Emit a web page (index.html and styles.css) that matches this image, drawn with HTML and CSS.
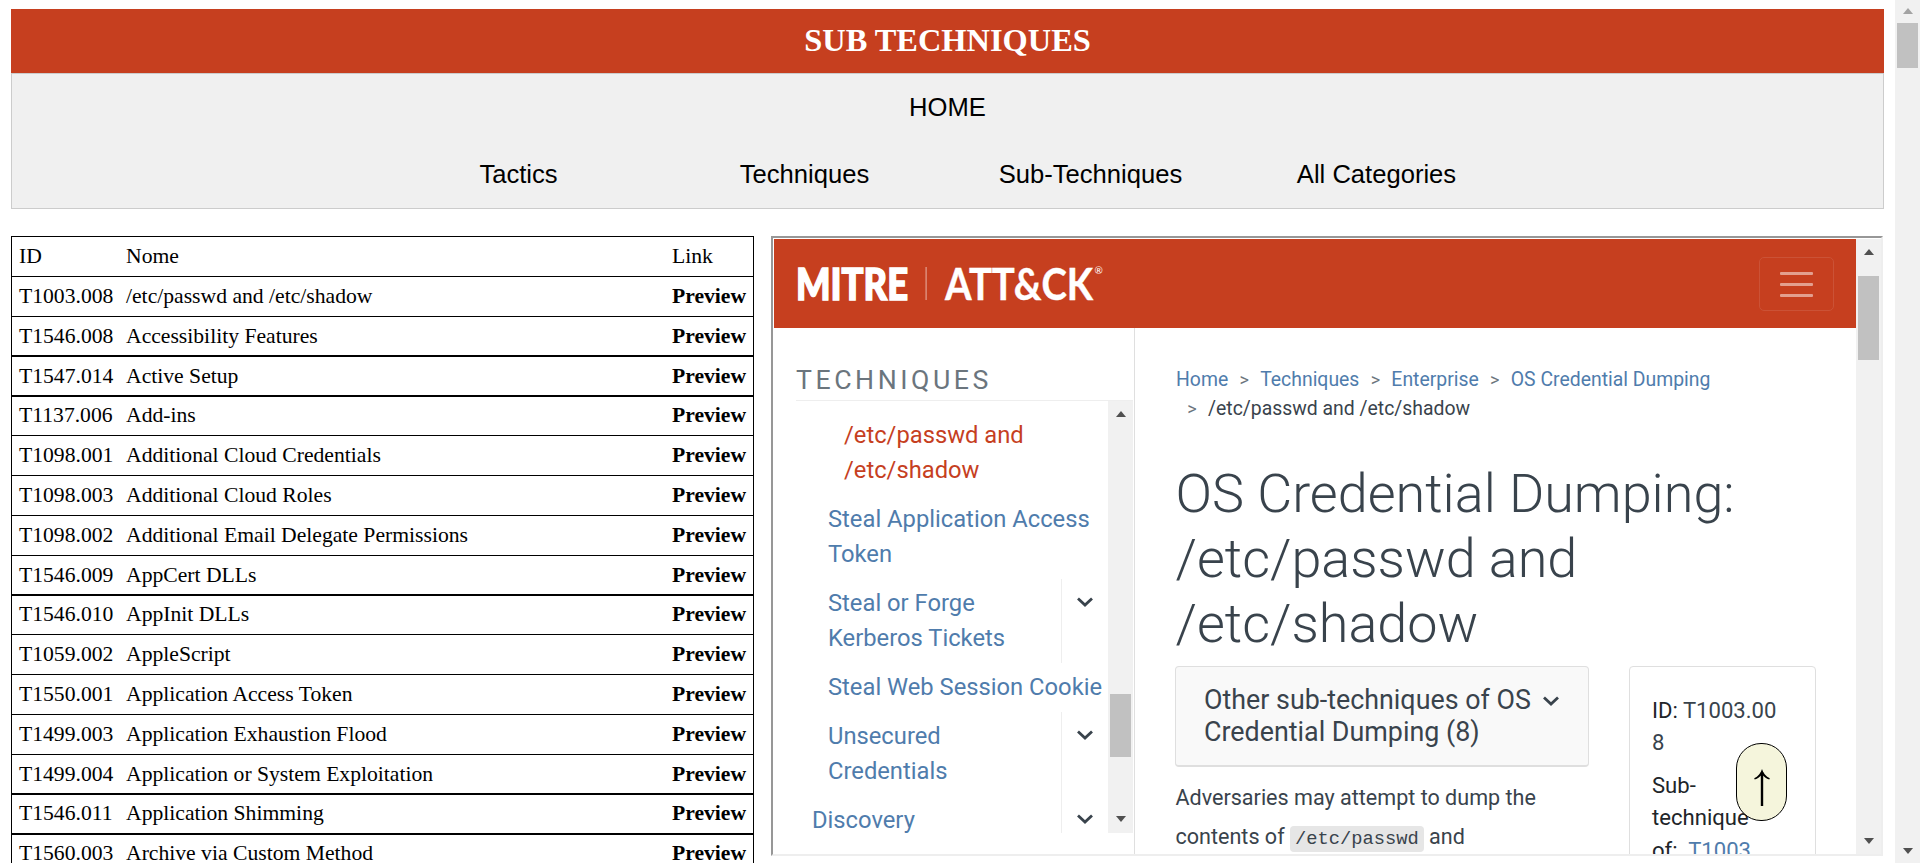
FILE: index.html
```html
<!DOCTYPE html>
<html lang="en">
<head>
<meta charset="utf-8">
<title>Sub Techniques</title>
<link rel="stylesheet" href="styles.css">
</head>
<body>
<div class="page">
  <main class="content">
    <header class="banner"><h1 class="banner-title"><span>SUB TECHNIQUES</span></h1></header>
    <nav class="nav">
      <div class="nav-home"><a>HOME</a></div>
      <div class="nav-links"><a>Tactics</a><a>Techniques</a><a>Sub-Techniques</a><a>All Categories</a></div>
    </nav>
    <div class="columns">
      <div class="table">
        <div class="row"><span>ID</span><span>Nome</span><span>Link</span></div>
        <div class="row"><span>T1003.008</span><span>/etc/passwd and /etc/shadow</span><b>Preview</b></div>
        <div class="row short"><span>T1546.008</span><span>Accessibility Features</span><b>Preview</b></div>
        <div class="row thick low"><span>T1547.014</span><span>Active Setup</span><b>Preview</b></div>
        <div class="row thick"><span>T1137.006</span><span>Add-ins</span><b>Preview</b></div>
        <div class="row"><span>T1098.001</span><span>Additional Cloud Credentials</span><b>Preview</b></div>
        <div class="row"><span>T1098.003</span><span>Additional Cloud Roles</span><b>Preview</b></div>
        <div class="row"><span>T1098.002</span><span>Additional Email Delegate Permissions</span><b>Preview</b></div>
        <div class="row short"><span>T1546.009</span><span>AppCert DLLs</span><b>Preview</b></div>
        <div class="row thick"><span>T1546.010</span><span>AppInit DLLs</span><b>Preview</b></div>
        <div class="row"><span>T1059.002</span><span>AppleScript</span><b>Preview</b></div>
        <div class="row"><span>T1550.001</span><span>Application Access Token</span><b>Preview</b></div>
        <div class="row"><span>T1499.003</span><span>Application Exhaustion Flood</span><b>Preview</b></div>
        <div class="row short"><span>T1499.004</span><span>Application or System Exploitation</span><b>Preview</b></div>
        <div class="row thick"><span>T1546.011</span><span>Application Shimming</span><b>Preview</b></div>
        <div class="row thick"><span>T1560.003</span><span>Archive via Custom Method</span><b>Preview</b></div>
      </div>
      <div class="frame">
        <div class="doc">
          <div class="topbar">
            <svg class="logo" width="310" height="40" viewBox="0 0 310 40">
              <text class="logo-mitre" x="0" y="35.500" textLength="112" lengthAdjust="spacingAndGlyphs">MITRE</text>
              <rect class="logo-rule" x="129.5" y="3" width="1.2" height="33"/>
              <text class="logo-attack" x="149" y="35.500" textLength="148" lengthAdjust="spacingAndGlyphs">ATT&amp;CK</text>
              <text class="logo-reg" x="298.5" y="10">®</text>
            </svg>
            <div class="burger"><i></i><i></i><i></i></div>
          </div>
          <div class="doc-body">
            <aside class="side">
              <div class="side-title"><span>TECHNIQUES</span></div>
              <div class="side-main">
                <div class="side-list">
                  <div class="item deep"><a>/etc/passwd and<br>/etc/shadow</a></div>
                  <div class="item"><a>Steal Application Access<br>Token</a></div>
                  <div class="item"><a>Steal or Forge<br>Kerberos Tickets</a><div class="toggle"><svg class="chev" viewBox="0 0 16 10"><path d="M1 1.5l7 6.5 7-6.5"/></svg></div></div>
                  <div class="item one"><a>Steal Web Session Cookie</a></div>
                  <div class="item"><a>Unsecured<br>Credentials</a><div class="toggle"><svg class="chev" viewBox="0 0 16 10"><path d="M1 1.5l7 6.5 7-6.5"/></svg></div></div>
                  <div class="item one top"><a>Discovery</a><div class="toggle"><svg class="chev" viewBox="0 0 16 10"><path d="M1 1.5l7 6.5 7-6.5"/></svg></div></div>
                </div>
                <div class="scroll side-scroll"><div class="up"></div><div class="thumb"></div><div class="down"></div></div>
              </div>
            </aside>
            <article class="article">
              <div class="crumbs"><a>Home</a><i>&gt;</i><a>Techniques</a><i>&gt;</i><a>Enterprise</a><i>&gt;</i><a>OS Credential Dumping</a></div>
              <div class="crumbs second"><i>&gt;</i><span>/etc/passwd and /etc/shadow</span></div>
              <h2 class="title"><span>OS Credential Dumping:</span><br>/etc/passwd and<br>/etc/shadow</h2>
              <div class="cards">
                <div class="left">
                  <div class="subs"><div class="subs-text"><span>Other sub-techniques of OS</span><br>Credential Dumping (8)</div><svg class="chev" viewBox="0 0 16 10"><path d="M1 1.5l7 6.5 7-6.5"/></svg></div>
                  <p class="desc"><span>Adversaries may attempt to dump the</span><br>contents of <code>/etc/passwd</code> and</p>
                </div>
                <div class="info">
                  <div><b>ID:</b> T1003.00<br>8</div>
                  <div class="info-sub"><b>Sub-<br>technique<br>of:</b>&nbsp; <a>T1003</a></div>
                </div>
              </div>
            </article>
          </div>
        </div>
        <div class="scroll frame-scroll"><div class="up"></div><div class="thumb"></div><div class="down"></div></div>
      </div>
    </div>
  </main>
  <div class="scroll page-scroll"><div class="up dim"></div><div class="thumb"></div><div class="down"></div></div>
  <div class="to-top"><svg width="16" height="38" viewBox="0 0 16 38"><path d="M8 3V37" stroke="#000" stroke-width="2.4"/><path d="M8 0c1.200 4 4 7.500 7.800 9.300l-.5 1.200c-3-.9-5.500-2.700-7.300-5-1.800 2.300-4.300 4.100-7.300 5l-.5-1.200C4 7.500 6.800 4 8 0z"/></svg></div>
</div>
</body>
</html>
```
FILE: styles.css
```css
* { box-sizing: border-box; }
body { margin: 0; height: 863px; overflow: hidden; background: #fff; color: #000; font-family: "Liberation Serif", serif; }
.page { display: flex; height: 863px; overflow: hidden; }
.content { flex: 1; min-width: 0; padding: 9px 11px 0; }
.banner { height: 64px; background: #c63f1f; }
.banner-title { margin: 0; font-size: 32.4px; line-height: 62px; color: #fff; text-align: center; }
.nav { height: 136px; padding-top: 15px; border: 1px solid #ccc; background: #f0f0f0; font: 25.6px/36px "Liberation Sans", sans-serif; }
.nav-home { text-align: center; }
.nav-links { display: grid; grid-template-columns: repeat(4, 286px); justify-content: center; margin-top: 31px; text-align: center; }
.columns { display: flex; align-items: flex-start; justify-content: space-between; padding: 27px 1px 0 0; }

.table { width: 743px; height: 627px; overflow: hidden; border: solid #000; border-width: 0 1px; font-size: 21.65px; line-height: 38px; }
.row { display: grid; grid-template-columns: 107px 546px 1fr; height: 40px; padding-left: 7px; border-top: 1px solid #000; white-space: nowrap; }
.short { height: 39px; }
.thick { box-shadow: inset 0 1px #000; }
.low { padding-top: 1px; }

.frame { display: flex; width: 1112px; height: 620px; overflow: hidden; border: 2px solid; border-color: #979797 #eee #eee #979797; padding: 1px 0 0 1px; }
.doc { flex: 1; min-width: 0; height: 615px; overflow: hidden; font-family: Roboto, sans-serif; color: #39434c; display: flex; flex-direction: column; }
.topbar { display: flex; justify-content: space-between; height: 89px; padding: 18px 22px 0; background: #c63f1f; flex: none; }
.logo { margin-top: 7px; fill: #fff; overflow: visible; }
.logo-mitre { font: 900 44px Lato, sans-serif; stroke: #fff; stroke-width: 1.6; }
.logo-attack { font: 700 44px Lato, sans-serif; stroke: #fff; stroke-width: .4; }
.logo-reg { font: 10px Lato, sans-serif; }
.logo-rule { opacity: .5; }
.burger { display: flex; flex-direction: column; align-items: center; justify-content: center; gap: 8px; width: 75px; height: 54px; border: 1px solid #cb5236; border-radius: 5px; }
.burger i { width: 33px; height: 3px; border-radius: 1px; background: #e39f8f; }
.doc-body { display: flex; flex: 1; min-height: 0; }
.side { width: 361px; padding-left: 22px; border-right: 1px solid #dfdfdf; }
.side-title { height: 73px; padding-top: 34px; border-bottom: 1px solid #eee; margin-right: 1px; font-size: 26.7px; line-height: 36px; letter-spacing: 3.55px; color: #6b757d; }
.side-main { display: flex; height: 432px; overflow: hidden; padding-right: 1px; }
.side-list { flex: 1; padding-top: 10px; font-size: 23.75px; line-height: 35.4px; color: #4f7cac; white-space: nowrap; }
.item { display: flex; justify-content: space-between; height: 84px; padding-left: 32px; }
.item > a { padding-top: 7px; }
.deep { padding-left: 48px; color: #c63f1f; }
.one { height: 48.5px; }
.top { padding-left: 16px; }
.toggle { width: 47px; padding: 3px 0 0 15px; border-left: 1px solid #eee; }
.chev { width: 16px; height: 10px; fill: none; stroke: #39434c; stroke-width: 2.8; }

.scroll { position: relative; display: flex; flex-direction: column; align-items: center; flex: none; width: 25px; background: #f1f1f1; }
.up, .down { border: 5px solid transparent; border-top-width: 0; border-bottom: 6px solid #505050; }
.dim { border-bottom-color: #a3a3a3; }
.down { border-bottom: 0; border-top: 6px solid #505050; margin-top: auto; }
.thumb { width: 21px; background: #c1c1c1; }
.side-scroll { padding: 10px 0 11px; }
.side-scroll .thumb { height: 63px; margin-top: 277px; }
.frame-scroll { height: 615px; padding: 10px 0 10px; }
.frame-scroll .thumb { height: 84px; margin-top: 21px; }
.page-scroll { padding: 8px 0 9px; }
.page-scroll .thumb { height: 45px; margin-top: 9px; }

.article { flex: 1; padding: 37px 40px 0 41px; }
.crumbs { display: flex; font-size: 19.4px; line-height: 29.3px; color: #4f7cac; white-space: nowrap; }
.crumbs i { font-style: normal; font-size: 18px; color: #6b757d; width: 32px; text-align: center; }
.crumbs span { color: #39434c; }
.title { margin: 37px 0 0 -0.5px; font-size: 53.95px; font-weight: 300; line-height: 65px; white-space: nowrap; }
.cards { display: flex; justify-content: space-between; margin: 0 0 0 -1px; }
.left { width: 414px; margin-top: 10px; }
.subs { display: flex; gap: 12px; height: 101px; padding: 17px 0 0 28px; border: 1px solid #dfdfdf; border-bottom-width: 2px; border-radius: 4px; background: #f9f9f9; font-size: 26.85px; line-height: 32px; white-space: nowrap; }
.subs .chev { margin-top: 12px; }
.desc { margin: 11px 0 0 0.5px; font-size: 21.55px; line-height: 39px; white-space: nowrap; }
code { padding: 2px 5px; border-radius: 4px; background: #e6e6e6; font: 18.75px "Liberation Mono", monospace; }
.info { width: 187px; height: 260px; margin-top: 10px; padding: 27px 0 0 22px; border: 1px solid #dfdfdf; border-radius: 4px; font-size: 22.1px; line-height: 32.500px; white-space: nowrap; }
.info b { font-weight: 400; color: #212529; }
.info a { color: #4f7cac; }
.info-sub { margin-top: 10px; }

.to-top { position: absolute; left: 1736px; top: 743px; width: 51px; height: 78px; padding: 25px 0 0 16.500px; border: 1px solid #000; border-radius: 25px; background: #f5f5dc; }
```
